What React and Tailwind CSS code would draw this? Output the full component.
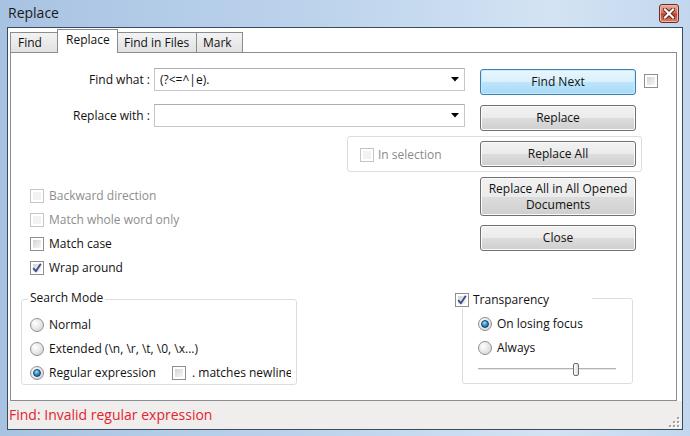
import React from 'react'

function Check({ checked, disabled }) {
  return (
    <span
      className={`flex h-[14px] w-[14px] shrink-0 border p-[2px] ${
        disabled ? 'border-[#c5c5c5] bg-white' : 'border-[#8e8f8f] bg-white'
      }`}
    >
      <span
        className={`flex h-full w-full items-center justify-center ${
          disabled ? 'bg-[#f2f2f2]' : 'bg-[linear-gradient(135deg,#d3d3d3,#f7f7f7)]'
        }`}
      >
        {checked && (
          <svg width="10" height="10" viewBox="0 0 10 10" className="overflow-visible">
            <path d="M1.2 5.2 L3.9 8.2 L8.8 0.8" fill="none" stroke="#3a4f8c" strokeWidth="1.9" />
          </svg>
        )}
      </span>
    </span>
  )
}

function Radio({ on }) {
  return (
    <span className="flex h-[14px] w-[14px] shrink-0 items-center justify-center rounded-full border border-[#8e8f8f] bg-[radial-gradient(circle_at_35%_35%,#ffffff,#cfcfcf)]">
      {on && (
        <span className="h-[8px] w-[8px] rounded-full border border-[#11416b] bg-[radial-gradient(circle_at_40%_30%,#9fe0ff,#2a86c5_55%,#0e4f84)]" />
      )}
    </span>
  )
}

function Btn({ children, def, className = '' }) {
  return (
    <div
      className={`flex w-[156px] shrink-0 items-center justify-center rounded-[3px] border text-center leading-[16px] text-[#111] ${
        def
          ? 'border-[#3c7fb1] bg-[linear-gradient(#eaf6fd_0%,#d9f0fc_50%,#bee6fd_50%,#a7d9f5_100%)] shadow-[inset_0_0_0_1px_#c5ebfd]'
          : 'border-[#707070] bg-[linear-gradient(#f2f2f2_0%,#ebebeb_50%,#dddddd_50%,#cfcfcf_100%)] shadow-[inset_0_0_0_1px_#fbfbfb]'
      } ${className}`}
    >
      {children}
    </div>
  )
}

function Combo({ value }) {
  return (
    <div className="ml-[4px] flex h-[23px] w-[311px] items-center border border-[#c3c6cc] border-t-[#abadb3] bg-white pl-[5px] pr-[5px]">
      <span className="flex-1 whitespace-nowrap">{value}</span>
      <svg width="8" height="5" viewBox="0 0 8 5">
        <path d="M0 0 H8 L4 4.5 Z" fill="#000" />
      </svg>
    </div>
  )
}

function CheckRow({ label, checked, disabled }) {
  return (
    <div className="flex h-[24px] items-center">
      <Check checked={checked} disabled={disabled} />
      <span className={`ml-[5px] ${disabled ? 'text-[#8d8d8d]' : 'text-[#111]'}`}>{label}</span>
    </div>
  )
}

function RadioRow({ label, on }) {
  return (
    <div className="flex h-[24px] items-center">
      <Radio on={on} />
      <span className="ml-[5px] whitespace-nowrap">{label}</span>
    </div>
  )
}

export default function App() {
  return (
    <div className="flex h-[436px] w-[690px] flex-col bg-[linear-gradient(90deg,#a8c3e2,#bcd3ec_45%,#d3e3f3_80%,#c2d7ee)] font-['Open_Sans',sans-serif] text-[12px] leading-[16px] text-[#111]">
      {/* Title bar */}
      <div className="flex h-[27px] shrink-0 items-start pl-[8px] pr-[11px]">
        <span className="mt-[4px] flex-1 text-[14px] leading-[18px] text-[#1a1a1a]">Replace</span>
        <div className="mt-[4px] flex h-[19px] w-[20px] items-center justify-center rounded-[3px] border border-[#6b2a22] bg-[linear-gradient(#eab3a3,#d66c58_45%,#c2432e_55%,#d98468)] shadow-[inset_0_0_0_1px_#f0b9a8]">
          <svg width="12" height="11" viewBox="0 0 12 11">
            <path d="M2 1.5 L10 9.5 M10 1.5 L2 9.5" stroke="#5b1d14" strokeWidth="4" strokeLinecap="square" />
            <path d="M2 1.5 L10 9.5 M10 1.5 L2 9.5" stroke="#ffffff" strokeWidth="2.2" strokeLinecap="square" />
          </svg>
        </div>
      </div>

      {/* Client area */}
      <div className="mx-[7px] mb-[6px] flex flex-1 flex-col border border-[#3b4b5e] bg-white">
        {/* Tabs */}
        <div className="ml-[2px] flex h-[25px] shrink-0 items-end">
          <div className="flex h-[21px] w-[48px] items-center border border-[#898c95] bg-[linear-gradient(#f3f3f3,#e1e1e1)] pl-[7px]">Find</div>
          <div className="relative z-10 -ml-px flex h-[24px] w-[61px] items-center border border-b-0 border-[#898c95] bg-white pb-[3px] pl-[8px]">Replace</div>
          <div className="-ml-px flex h-[21px] w-[80px] items-center border border-[#898c95] bg-[linear-gradient(#f3f3f3,#e1e1e1)] pl-[6px]">Find in Files</div>
          <div className="-ml-px flex h-[21px] w-[47px] items-center border border-[#898c95] bg-[linear-gradient(#f3f3f3,#e1e1e1)] pl-[6px]">Mark</div>
        </div>

        {/* Panel */}
        <div className="-mt-px ml-[2px] flex h-[349px] w-[667px] shrink-0 flex-col border border-[#898c95] bg-white">
          {/* Find what */}
          <div className="mt-[15px] flex items-start">
            <div className="h-[23px] w-[139px] text-right leading-[23px]">Find what :</div>
            <Combo value="(?<=^|e)." />
            <Btn def className="ml-[15px] mt-[1px] h-[26px]">Find Next</Btn>
            <div className="ml-[8px] mt-[6px]">
              <Check />
            </div>
          </div>

          {/* Replace with */}
          <div className="mt-[9px] flex items-start">
            <div className="h-[23px] w-[139px] text-right leading-[23px]">Replace with :</div>
            <Combo value="" />
            <Btn className="ml-[15px] mt-[1px] h-[26px]">Replace</Btn>
          </div>

          {/* In selection group */}
          <div className="ml-[336px] mt-[5px] flex h-[36px] w-[295px] items-start rounded-[3px] border border-[#d5dfe5] pl-[12px]">
            <div className="mt-[10px] flex flex-1 items-center">
              <Check disabled />
              <span className="ml-[4px] text-[#8a8a8a]">In selection</span>
            </div>
            <Btn className="mr-[5px] mt-[4px] h-[26px]">Replace All</Btn>
          </div>

          {/* Options + buttons */}
          <div className="flex items-start">
            <div className="w-[469px] pl-[19px] pt-[12px]">
              <CheckRow label="Backward direction" disabled />
              <CheckRow label="Match whole word only" disabled />
              <CheckRow label="Match case" />
              <CheckRow label="Wrap around" checked />
            </div>
            <div className="flex flex-col">
              <Btn className="mt-[5px] h-[39px]">
                Replace All in All Opened
                <br />
                Documents
              </Btn>
              <Btn className="mt-[9px] h-[26px]">Close</Btn>
            </div>
          </div>

          {/* Bottom groups */}
          <div className="flex items-start">
            <div className="ml-[10px] mt-[10px] flex w-[276px] flex-col">
              <div className="relative z-10 ml-[7px] self-start bg-white px-[2px] leading-[16px]">Search Mode</div>
              <div className="-mt-[7px] h-[86px] rounded-[3px] border border-[#d5dfe5] pl-[8px] pt-[13px]">
                <RadioRow label="Normal" />
                <RadioRow label="Extended (\n, \r, \t, \0, \x...)" />
                <div className="flex h-[24px] items-center">
                  <div className="w-[142px]">
                    <RadioRow label="Regular expression" on />
                  </div>
                  <div className="flex w-[119px] items-center overflow-hidden whitespace-nowrap">
                    <Check />
                    <span className="ml-[6px]">. matches newline</span>
                  </div>
                </div>
              </div>
            </div>

            <div className="ml-[158px] mt-[12px] flex flex-col">
              <div className="relative z-10 flex h-[16px] w-[137px] items-center bg-white">
                <Check checked />
                <span className="ml-[4px]">Transparency</span>
              </div>
              <div className="-mt-[10px] ml-[7px] h-[86px] w-[171px] rounded-[3px] border border-[#d5dfe5] pl-[15px] pt-[13px]">
                <RadioRow label="On losing focus" on />
                <RadioRow label="Always" />
                <div className="mt-[2px] flex h-[14px] items-center">
                  <div className="h-[3px] w-[95px] border-t border-b border-t-[#b3b3b3] border-b-white bg-[#e6e8e8]" />
                  <div className="h-[13px] w-[6px] rounded-[2px] border border-[#6f6f6f] bg-[linear-gradient(90deg,#fdfdfd,#dcdcdc)]" />
                  <div className="h-[3px] w-[37px] border-t border-b border-t-[#b3b3b3] border-b-white bg-[#e6e8e8]" />
                </div>
              </div>
            </div>
          </div>
        </div>

        {/* Status bar */}
        <div className="flex flex-1 items-center justify-between bg-[#f0eded] pl-[1px]">
          <span className="text-[14px] leading-[20px] text-[#e3242d]">Find: Invalid regular expression</span>
          <svg width="12" height="12" viewBox="0 0 12 12" className="mr-[2px] self-end mb-[1px]">
            {[
              [9, 1],
              [9, 5],
              [5, 5],
              [9, 9],
              [5, 9],
              [1, 9],
            ].map(([x, y]) => (
              <g key={`${x}-${y}`}>
                <rect x={x + 1} y={y + 1} width="2" height="2" fill="#ffffff" />
                <rect x={x} y={y} width="2" height="2" fill="#a3a3a3" />
              </g>
            ))}
          </svg>
        </div>
      </div>
    </div>
  )
}
